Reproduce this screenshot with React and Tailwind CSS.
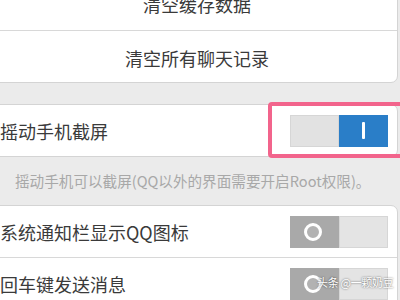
import React from 'react';

const font = { fontFamily: '"Noto Sans CJK SC", "Noto Sans", sans-serif' };

const SwitchOn = () => (
  <div className="flex h-[32px] w-[98px] shrink-0">
    <div className="w-[49px] h-full bg-[#e2e2e2] border border-[#d6d6d6]" />
    <div className="w-[49px] h-full bg-[#2a7ec8] flex items-center justify-center">
      <div className="w-[3px] h-[17px] bg-white rounded-[1px]" />
    </div>
  </div>
);

const SwitchOff = () => (
  <div className="flex h-[32px] w-[98px] shrink-0">
    <div className="w-[49px] h-full bg-[#a9a9a9] flex items-center justify-center">
      <div className="w-[18px] h-[18px] rounded-full border-[3px] border-white bg-[#b2b2b2] -ml-[3px]" />
    </div>
    <div className="w-[49px] h-full bg-[#e4e4e4] border border-[#d6d6d6]" />
  </div>
);

const Row = ({ label, children, className = '' }) => (
  <div className={`flex items-center justify-between pl-[9px] pr-[9px] text-[18px] text-[#3a3a3a] ${className}`}>
    <span className="leading-none">{label}</span>
    {children}
  </div>
);

export default function App() {
  return (
    <div className="relative w-[400px] h-[300px] overflow-hidden bg-[#ebebeb]" style={font}>
      <div className="flex flex-col -mt-[22px]">
        {/* clear data group */}
        <div className="-ml-[10px] mr-[2px] bg-white border border-[#d4d4d4] rounded-b-[7px]">
          <div className="h-[52px] flex items-center justify-center text-[18px] text-[#3a3a3a] border-b border-[#d8d8d8] pl-[6px]">
            清空缓存数据
          </div>
          <div className="h-[51px] flex items-center justify-center text-[18px] text-[#3a3a3a] pl-[6px] pt-[3px]">
            清空所有聊天记录
          </div>
        </div>

        {/* shake screenshot */}
        <div className="mt-[21px] -ml-[10px] mr-[2px] bg-white border border-[#d4d4d4] rounded-[7px]">
          <Row label="摇动手机截屏" className="h-[51px]">
            <SwitchOn />
          </Row>
        </div>
        <div className="h-[48px] flex items-center pl-[15px] text-[14.6px] text-[#a8a8a8] whitespace-nowrap">
          摇动手机可以截屏(QQ以外的界面需要开启Root权限)。
        </div>

        {/* notification group */}
        <div className="-ml-[10px] mr-[2px] bg-white border border-[#d4d4d4] rounded-t-[7px]">
          <Row label="系统通知栏显示QQ图标" className="h-[52px] border-b border-[#d8d8d8]">
            <SwitchOff />
          </Row>
          <Row label="回车键发送消息" className="h-[52px]">
            <SwitchOff />
          </Row>
        </div>
      </div>

      {/* highlight box */}
      <div className="absolute left-[268px] top-[102px] w-[136px] h-[56px] border-4 border-[#f2648c] rounded-[4px]" />

      {/* watermark */}
      <div
        className="absolute left-[317px] top-[277px] text-[11px] tracking-[-0.3px] text-white leading-none whitespace-nowrap"
        style={{ textShadow: '0 0 2px rgba(0,0,0,0.7)' }}
      >
        头条 @一颗奶豆
      </div>
    </div>
  );
}
